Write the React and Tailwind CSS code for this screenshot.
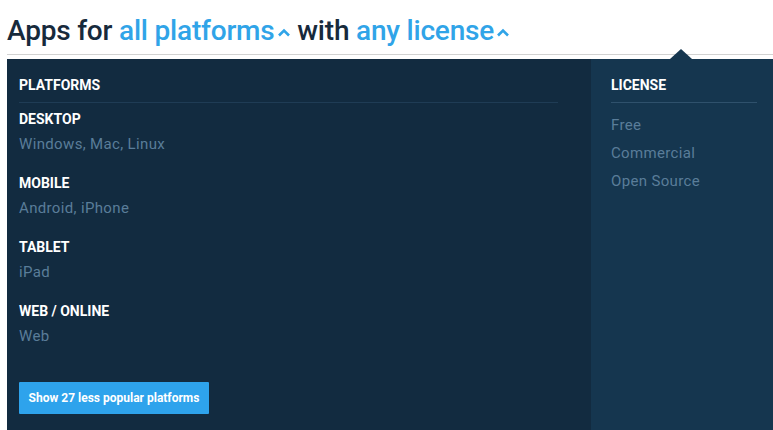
import { useState } from 'react';

const groups = [
  { title: 'DESKTOP', sub: 'Windows, Mac, Linux' },
  { title: 'MOBILE', sub: 'Android, iPhone' },
  { title: 'TABLET', sub: 'iPad' },
  { title: 'WEB / ONLINE', sub: 'Web' },
];

const licenses = ['Free', 'Commercial', 'Open Source'];

function Caret() {
  return (
    <svg width="14" height="9" viewBox="0 0 14 9" className="inline-block ml-[2px] mb-[1px]">
      <path d="M2 7.5 L7 2.5 L12 7.5" fill="none" stroke="#30a4e8" strokeWidth="2.6" />
    </svg>
  );
}

export default function App() {
  const [open] = useState(true);

  return (
    <div className="w-[773px] h-[430px] overflow-hidden bg-white pl-[7px]" style={{ fontFamily: 'Roboto, Lato, sans-serif' }}>
      {/* Heading */}
      <h1 className="pt-[11px] h-[54px] text-[28px] leading-[40px] font-medium text-[#172a3c] whitespace-nowrap tracking-[-0.2px]">
        Apps for <span className="text-[#30a4e8]">all platforms<Caret /></span> with{' '}
        <span className="text-[#30a4e8]">any license<Caret /></span>
      </h1>
      <div className="h-px bg-[#d2d2d2]" />

      {/* Dropdown panel */}
      {open && (
        <div className="relative mt-[4px] flex h-[371px]">
          <div className="absolute -top-[10px] left-[663px] w-0 h-0 border-l-[11px] border-r-[11px] border-b-[10px] border-l-transparent border-r-transparent border-b-[#15364f]" />

          {/* Platforms */}
          <div className="flex-1 bg-[#122b40] pl-3 pr-[33px] pt-4">
            <div className="pb-[7px] border-b border-[#1f3c55] text-[14px] leading-5 font-bold text-white">PLATFORMS</div>
            <div className="mt-[6px] flex flex-col gap-[17px]">
              {groups.map((g) => (
                <div key={g.title}>
                  <div className="text-[14px] leading-5 font-bold text-white">{g.title}</div>
                  <div className="mt-[3px] text-[15px] leading-6 tracking-[0.35px] text-[#5a7d99]">{g.sub}</div>
                </div>
              ))}
            </div>
            <button className="mt-[34px] h-8 w-[190px] bg-[#2ea3ec] text-white text-[12px] font-bold rounded-[1px]">
              Show 27 less popular platforms
            </button>
          </div>

          {/* License */}
          <div className="w-[182px] bg-[#15364f] pl-5 pr-4 pt-4">
            <div className="pb-[7px] border-b border-[#2f516c] text-[14px] leading-5 font-bold text-white">LICENSE</div>
            <div className="mt-[8px] flex flex-col">
              {licenses.map((l) => (
                <div key={l} className="text-[15px] leading-7 tracking-[0.35px] text-[#5a7d99]">{l}</div>
              ))}
            </div>
          </div>
        </div>
      )}
    </div>
  );
}
